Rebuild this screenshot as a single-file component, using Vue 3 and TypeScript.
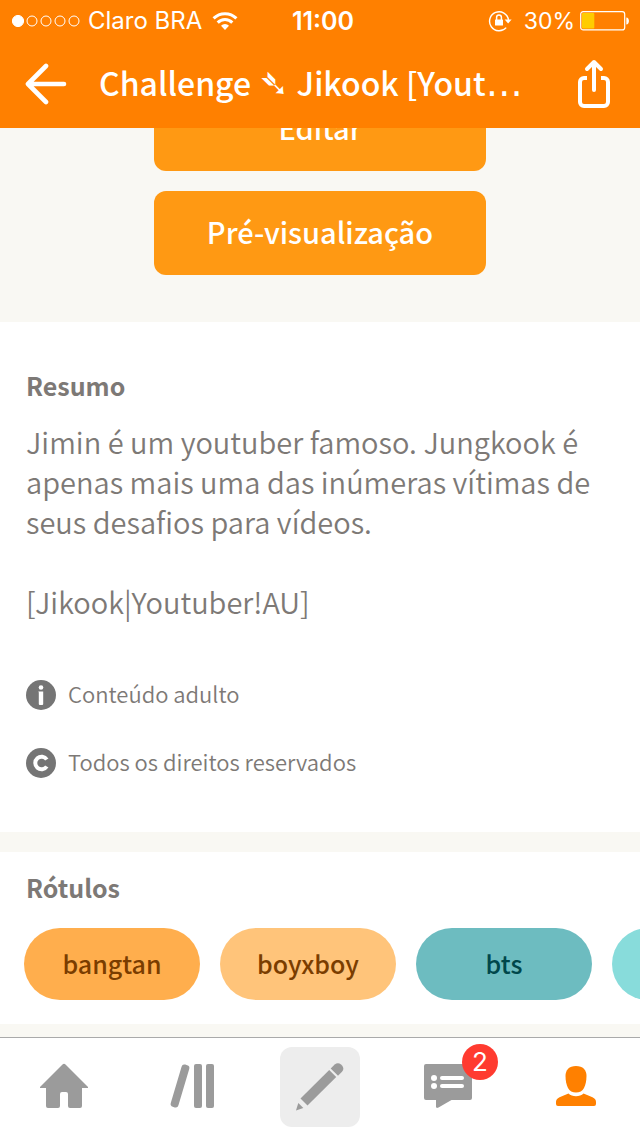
<script setup lang="ts">
import { ref } from 'vue'

interface Tag {
  name: string
  tone: string
}

const tags: Tag[] = [
  { name: 'bangtan', tone: 'amber' },
  { name: 'boyxboy', tone: 'peach' },
  { name: 'bts', tone: 'teal' },
  { name: '', tone: 'aqua' },
]

const signalDots = [true, false, false, false, false]
const battery = ref(30)
const unread = ref(2)
</script>

<template>
  <div class="screen">
    <header class="top">
      <div class="status">
        <div class="carrier">
          <svg class="signal" viewBox="0 0 68 12" aria-hidden="true">
            <circle
              v-for="(on, i) in signalDots"
              :key="i"
              :cx="6 + i * 14"
              cy="6"
              :r="on ? 5.6 : 5"
              :fill="on ? '#fff' : 'none'"
              stroke="#fff"
              stroke-width="1"
            />
          </svg>
          <span>Claro BRA</span>
          <svg class="wifi" viewBox="0 0 26 18" aria-hidden="true">
            <g fill="none" stroke="#fff" stroke-width="3">
              <path d="M1.6 6.4a16 16 0 0 1 22.8 0" />
              <path d="M5.7 10.6a10.2 10.2 0 0 1 14.6 0" />
            </g>
            <path d="M13 18l-4-4.300a5.800 5.800 0 0 1 8 0z" fill="#fff" />
          </svg>
        </div>
        <span class="clock">11:00</span>
        <div class="power">
          <svg class="lock" viewBox="0 0 24 22" aria-hidden="true">
            <path d="M18.200 17.600A9.500 9.500 0 1 1 20.500 10" fill="none" stroke="#fff" stroke-width="1.400" />
            <path d="M16.600 9.600h7L20.100 13.600z" fill="#fff" />
            <rect x="7" y="9.500" width="8" height="6" rx="0.600" fill="#fff" />
            <path d="M8.600 10V7.300a2.400 2.400 0 0 1 4.800 0V10" fill="none" stroke="#fff" stroke-width="1.500" />
          </svg>
          <span class="percent">{{ battery }}%</span>
          <svg class="battery" viewBox="0 0 50 20" aria-hidden="true">
            <rect x="0.700" y="0.700" width="44" height="18.200" rx="2.500" fill="none" stroke="#fff" stroke-width="1.200" />
            <rect x="2" y="2" :width="battery * 0.41" height="15.600" rx="1" fill="#fc0" />
            <path d="M46.300 6.500c3.500 0 3.500 7 0 7z" fill="#fff" />
          </svg>
        </div>
      </div>
      <div class="bar">
        <button class="icon-button" type="button" aria-label="Voltar">
          <svg width="42" height="42" viewBox="0 0 42 42">
            <path d="M21 3L3 21l18 18M4 21h35" fill="none" stroke="#fff" stroke-width="4.600" stroke-linecap="round" stroke-linejoin="round" />
          </svg>
        </button>
        <h1>Challenge <span class="symbol">➴</span> Jikook [Yout<span class="symbol">…</span></h1>
        <button class="icon-button" type="button" aria-label="Compartilhar">
          <svg width="34" height="50" viewBox="0 0 34 50">
            <g fill="none" stroke="#fff" stroke-width="4" stroke-linecap="round" stroke-linejoin="round">
              <path d="M17 31V3M10 10l7-7 7 7" />
              <path d="M10 19H7a4 4 0 0 0-4 4v20a4 4 0 0 0 4 4h20a4 4 0 0 0 4-4V23a4 4 0 0 0-4-4h-3" stroke-linecap="butt" />
            </g>
          </svg>
        </button>
      </div>
    </header>

    <main>
      <section class="actions">
        <button type="button">Editar</button>
        <button type="button">Pré-visualização</button>
      </section>

      <section class="summary">
        <h2>Resumo</h2>
        <p>Jimin é um youtuber famoso. Jungkook é apenas mais uma das inúmeras vítimas de seus desafios para vídeos.</p>
        <p>[Jikook|Youtuber!AU]</p>
        <ul>
          <li>
            <svg width="30" height="30" viewBox="0 0 30 30" aria-hidden="true">
              <circle cx="15" cy="15" r="15" fill="#757575" />
              <circle cx="15" cy="7.500" r="2.300" fill="#fff" />
              <path d="M12.300 11.500h4.900V24a1 1 0 0 1-1 1h-2.400a1 1 0 0 1-1-1V12.500z" fill="#fff" />
            </svg>
            <span>Conteúdo adulto</span>
          </li>
          <li>
            <svg width="30" height="30" viewBox="0 0 30 30" aria-hidden="true">
              <circle cx="15" cy="15" r="15" fill="#757575" />
              <path d="M20.800 11.500A6.300 6.300 0 1 0 20.800 18.500" fill="none" stroke="#fff" stroke-width="4" />
            </svg>
            <span>Todos os direitos reservados</span>
          </li>
        </ul>
      </section>

      <section class="labels">
        <h2>Rótulos</h2>
        <div class="tags">
          <button v-for="tag in tags" :key="tag.tone" type="button" :class="['tag', tag.tone]">{{ tag.name }}</button>
        </div>
      </section>
    </main>

    <nav class="tabs">
      <button type="button" aria-label="Início">
        <svg width="48" height="48" viewBox="0 0 48 48">
          <path d="M22.500 1.500q1.500-1.500 3 0L48 24v1h-6v18a2 2 0 0 1-2 2H30a2 2 0 0 1-2-2V31a2 2 0 0 0-2-2h-4a2 2 0 0 0-2 2v12a2 2 0 0 1-2 2H8a2 2 0 0 1-2-2V25H0v-1z" fill="#9b9b9b" />
        </svg>
      </button>
      <button type="button" aria-label="Biblioteca">
        <svg width="48" height="48" viewBox="0 0 48 48">
          <g fill="#9b9b9b">
            <rect x="26" y="1" width="8" height="44" rx="2" />
            <rect x="38" y="1" width="8" height="44" rx="2" />
            <rect x="8" y="1" width="8" height="44" rx="3" transform="rotate(16.500 12 23)" />
          </g>
        </svg>
      </button>
      <button type="button" aria-label="Escrever">
        <span class="tile">
          <svg width="50" height="50" viewBox="0 0 50 50">
            <g fill="#9b9b9b">
              <path d="M34.200 8l7 7L12.500 43.500 5.500 36.500z" />
              <path d="M35.700 6.500l4-4q3.300-2.600 6.300 0l1 1q2.700 3.200 0 6.300l-4 4z" />
              <path d="M3.300 41l5 5L1 48.500z" />
            </g>
          </svg>
        </span>
      </button>
      <button type="button" aria-label="Mensagens">
        <span class="badged">
          <svg width="48" height="48" viewBox="0 0 48 48">
            <path d="M2 1h44a2 2 0 0 1 2 2v32a2 2 0 0 1-2 2H27.500L14.500 44.500q-2.500 1.300-2.500-1V37H2a2 2 0 0 1-2-2V3a2 2 0 0 1 2-2z" fill="#9b9b9b" />
            <g fill="#fff">
              <circle cx="10" cy="15" r="3" />
              <circle cx="10" cy="23" r="3" />
              <rect x="16" y="13" width="24" height="4" rx="2" />
              <rect x="16" y="21" width="24" height="4" rx="2" />
            </g>
          </svg>
          <span class="badge">{{ unread }}</span>
        </span>
      </button>
      <button type="button" aria-label="Perfil">
        <svg width="42" height="44" viewBox="0 0 42 44">
          <g fill="#ff8000">
            <path d="M21 1c7 0 10.500 4 10.500 10 0 5-1 9-2.500 12s-4.500 4.500-8 4.500-6.500-1.500-8-4.500-2.500-7-2.500-12C10.500 5 14 1 21 1z" />
            <path d="M13.500 28.500c3.500 3.500 11.500 3.500 15 0l9 3.700q3.500 1.600 3.500 4.800v2q0 2-2 2H3q-2 0-2-2v-2q0-3.200 3.500-4.800z" />
          </g>
        </svg>
      </button>
    </nav>
  </div>
</template>

<style>
body {
  margin: 0;
}
</style>

<style scoped>
.screen {
  display: flex;
  flex-direction: column;
  height: 100vh;
  overflow: hidden;
  background: #f9f8f3;
  color: #7d7976;
  font-family: "Noto Sans CJK SC", "Noto Sans", sans-serif;
}

button {
  border: 0;
  padding: 0;
  background: none;
  color: inherit;
  font: inherit;
}

svg {
  display: block;
  flex: none;
}

h1,
h2,
p,
ul {
  margin: 0;
  padding: 0;
}

.top {
  flex: none;
  background: #ff8000;
  color: #fff;
}

.status {
  display: grid;
  grid-template-columns: 1fr auto 1fr;
  align-items: center;
  height: 40px;
  padding: 0 10px 0 12px;
  font: 24px/42px Inter, sans-serif;
}

.carrier,
.power {
  display: flex;
  align-items: center;
}

.power {
  justify-content: flex-end;
}

.signal {
  width: 68px;
  height: 12px;
  margin-right: 8px;
}

.wifi {
  width: 26px;
  height: 18px;
  margin-left: 10px;
}

.clock {
  margin-left: 4px;
  font-size: 25px;
  font-weight: 600;
}

.percent {
  font-size: 23px;
}

.lock {
  width: 24px;
  height: 22px;
  margin-right: 12px;
}

.battery {
  width: 50px;
  height: 20px;
  margin-left: 5px;
}

.bar {
  display: flex;
  align-items: center;
  height: 88px;
  padding: 0 29px 0 25px;
}

.icon-button {
  flex: none;
}

h1 {
  flex: 1;
  margin-left: 32px;
  padding-bottom: 4px;
  overflow: hidden;
  white-space: nowrap;
  font-size: 32px;
  line-height: 48px;
  font-weight: 500;
}

.symbol {
  font-family: "DejaVu Sans", sans-serif;
  font-size: 37px;
  line-height: 0;
}

main {
  flex: 1;
  min-height: 0;
  overflow: hidden;
}

.actions {
  display: flex;
  flex-direction: column;
  align-items: center;
  justify-content: flex-end;
  gap: 20px;
  height: 147px;
  padding-bottom: 47px;
  overflow: hidden;
}

.actions button {
  flex: none;
  width: 52%;
  height: 84px;
  padding-bottom: 4px;
  border-radius: 12px;
  background: #ff9913;
  color: #fff;
  font-size: 29px;
  font-weight: 500;
}

.summary {
  padding: 43px 26px 51px;
  background: #fff;
}

h2 {
  font-size: 25px;
  line-height: 40px;
  font-weight: 700;
}

.summary h2 {
  margin-bottom: 16px;
}

p {
  margin-bottom: 40px;
  font-size: 29px;
  line-height: 40px;
  font-weight: 350;
}

ul {
  display: grid;
  gap: 32px;
  margin-top: 56px;
  list-style: none;
}

li {
  display: flex;
  align-items: center;
  gap: 12px;
  height: 36px;
  font-size: 22px;
  line-height: 32px;
  font-weight: 350;
}

li span {
  padding-bottom: 4px;
}

.labels {
  margin-top: 20px;
  padding: 15px 0 24px;
  background: #fff;
}

.labels h2 {
  margin: 0 26px 21px;
}

.tags {
  display: flex;
  gap: 20px;
  padding-left: 24px;
  overflow: hidden;
}

.tag {
  flex: none;
  min-width: 176px;
  height: 72px;
  padding-bottom: 2px;
  border-radius: 36px;
  font-size: 25px;
  font-weight: 500;
}

.amber {
  background: #ffae4d;
  color: #7a3d00;
}

.peach {
  background: #ffc47a;
  color: #7a3d00;
}

.teal {
  background: #6dbcc0;
  color: #00474b;
}

.aqua {
  background: #88dcdb;
}

.tabs {
  flex: none;
  display: grid;
  grid-template-columns: repeat(5, 1fr);
  height: 98px;
  border-top: 1px solid #aaa;
  background: #fff;
}

.tabs button {
  display: flex;
  align-items: center;
  justify-content: center;
}

.tile {
  display: flex;
  align-items: center;
  justify-content: center;
  width: 80px;
  height: 80px;
  border-radius: 12px;
  background: #ededed;
}

.badged {
  position: relative;
}

.badge {
  position: absolute;
  top: -19px;
  right: -26px;
  width: 36px;
  height: 36px;
  border-radius: 50%;
  background: #ff3b30;
  color: #fff;
  font: 26px/36px Inter, sans-serif;
}
</style>
